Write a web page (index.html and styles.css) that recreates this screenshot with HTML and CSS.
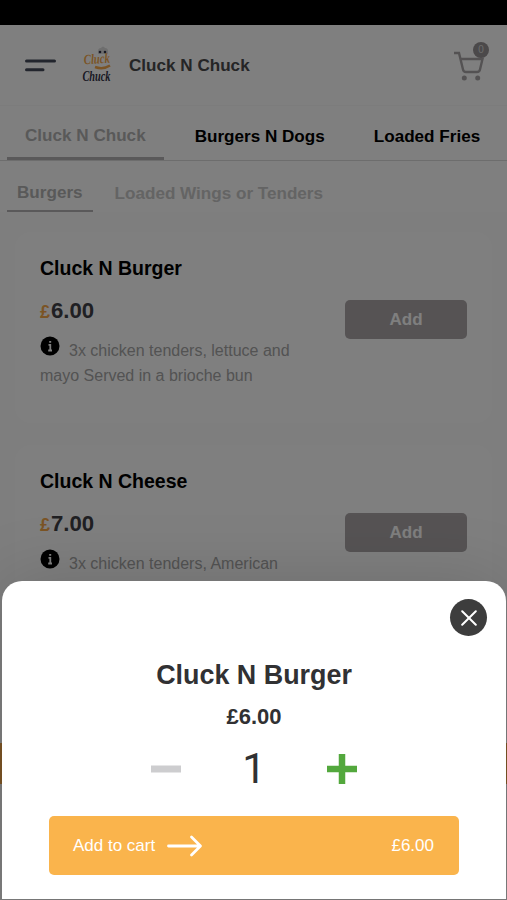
FILE: index.html
```html
<!DOCTYPE html>
<html lang="en">
  <head>
    <meta charset="UTF-8" />
    <meta name="viewport" content="width=device-width, initial-scale=1.0" />
    <title>Cluck N Chuck</title>
    <link rel="stylesheet" href="styles.css">
  </head>
  <body>
    <div class="status-bar"></div>

    <header class="header">
      <svg class="menu-icon" width="31" height="14" viewBox="0 0 31 14">
        <path d="M1.500 2H29.500M1.500 10.700H18" />
      </svg>
      <svg class="logo" width="34" height="40" viewBox="0 0 34 40">
        <path class="hat" d="M17 8V5q0-3 3-3q2-3 4 0q3 0 3 3v3z" />
        <circle cx="19" cy="6" r="1.300" />
        <circle cx="24" cy="6" r="1.300" />
        <text class="logo-top" x="3" y="17.500" textLength="26" lengthAdjust="spacingAndGlyphs" transform="rotate(-3 16 17)">Cluck</text>
        <path class="swoosh" d="M14 21Q22 24 29 19.500" />
        <text class="logo-bottom" x="1.500" y="34.500" textLength="28" lengthAdjust="spacingAndGlyphs">Chuck</text>
      </svg>
      <div class="shop-name">Cluck N Chuck</div>
      <div class="cart">
        <svg width="32" height="32" viewBox="0 0 32 32">
          <path d="M1 3H6L10 19.500Q10.500 22 13 22H24Q26.500 22 27 19.500L29.500 9H8" />
          <circle cx="11.300" cy="28" r="2.500" />
          <circle cx="24.700" cy="28" r="2.500" />
        </svg>
        <span class="cart-count">0</span>
      </div>
    </header>

    <nav class="tabs">
      <a class="tab active">Cluck N Chuck</a>
      <a class="tab">Burgers N Dogs</a>
      <a class="tab">Loaded Fries</a>
    </nav>

    <nav class="sub-tabs">
      <a class="sub-tab active">Burgers</a>
      <a class="sub-tab">Loaded Wings or Tenders</a>
    </nav>

    <main class="menu">
      <div class="card">
        <div class="card-info">
          <h2>Cluck N Burger</h2>
          <div class="price"><span>£</span>6.00</div>
          <p>
            <svg class="info-icon" width="20" height="20" viewBox="0 0 20 20">
              <circle cx="10" cy="10" r="9.500" />
              <path d="M8.500 8.800H10.300V14.500M8.200 14.500H12M9.200 5.800H11.200" />
            </svg>3x chicken tenders, lettuce and mayo Served in a brioche bun
          </p>
        </div>
        <button class="add-btn">Add</button>
      </div>

      <div class="card">
        <div class="card-info">
          <h2>Cluck N Cheese</h2>
          <div class="price"><span>£</span>7.00</div>
          <p>
            <svg class="info-icon" width="20" height="20" viewBox="0 0 20 20">
              <circle cx="10" cy="10" r="9.500" />
              <path d="M8.500 8.800H10.300V14.500M8.200 14.500H12M9.200 5.800H11.200" />
            </svg>3x chicken tenders, American
          </p>
        </div>
        <button class="add-btn">Add</button>
      </div>
    </main>

    <div class="cart-bar"></div>
    <div class="overlay"></div>

    <section class="sheet">
      <button class="close-btn" aria-label="Close">
        <svg width="16" height="16" viewBox="0 0 16 16">
          <path d="M1.200 1.200L14.800 14.800M14.800 1.200L1.200 14.800" />
        </svg>
      </button>
      <h1>Cluck N Burger</h1>
      <div class="sheet-price">£6.00</div>
      <div class="quantity">
        <svg class="minus" width="30" height="30" viewBox="0 0 30 30">
          <path d="M0 15H30" />
        </svg>
        <span>1</span>
        <svg class="plus" width="30" height="30" viewBox="0 0 30 30">
          <path d="M0 15H30M15 0V30" />
        </svg>
      </div>
      <button class="add-to-cart">
        <span>Add to cart</span>
        <svg width="36" height="22" viewBox="0 0 36 22">
          <path d="M1.500 11H33M24.500 2L33.500 11L24.500 20" />
        </svg>
        <span class="total">£6.00</span>
      </button>
    </section>
  </body>
</html>
```

FILE: styles.css
```css
* {
  box-sizing: border-box;
}

body {
  font-family: "Liberation Sans", Arial, sans-serif;
  background-color: #fcfcfc;
  margin: 0;
  height: 900px;
  position: relative;
  overflow: hidden;
}

h1,
h2,
p {
  margin: 0;
}

button {
  font-family: inherit;
  border: none;
  padding: 0;
  cursor: pointer;
}

.status-bar {
  height: 25px;
  background-color: #000;
}

.header {
  display: flex;
  align-items: center;
  height: 81px;
  padding: 1px 18px 0 25px;
  background-color: #fff;
  border-bottom: 1px solid #f8f8f8;
}

.menu-icon {
  fill: none;
  stroke: #454a5a;
  stroke-width: 3;
  stroke-linecap: round;
}

.logo {
  margin-left: 25px;
  overflow: visible;
  fill: #333348;
  font-family: "Liberation Serif", serif;
  font-style: italic;
  font-weight: bold;
}

.logo .hat {
  fill: #dcdcdc;
}

.logo-top {
  font-size: 14px;
  fill: #f6a94b;
}

.logo-bottom {
  font-size: 14px;
}

.swoosh {
  fill: none;
  stroke: #f6a94b;
  stroke-width: 2.5;
}

.shop-name {
  margin-left: 14px;
  padding-top: 1px;
  font-size: 17.1px;
  font-weight: bold;
  color: #4a4a4c;
}

.cart {
  position: relative;
  margin-left: auto;
  width: 36px;
  height: 32px;
}

.cart svg {
  display: block;
  fill: none;
  stroke: #a8a5a6;
  stroke-width: 2.4;
}

.cart circle {
  fill: #a8a5a6;
  stroke: none;
}

.cart-count {
  position: absolute;
  top: -8px;
  right: 0;
  width: 16px;
  height: 16px;
  border-radius: 50%;
  background-color: #979294;
  color: #d8d8d8;
  font-size: 10px;
  line-height: 16px;
  text-align: center;
}

.tabs,
.sub-tabs {
  display: flex;
  padding-left: 7px;
  background-color: #fff;
  font-size: 17.1px;
  font-weight: bold;
  white-space: nowrap;
}

.tabs {
  height: 55px;
  gap: 13px;
  border-bottom: 1px solid #dadada;
}

.tab {
  height: 54px;
  padding: 0 18px;
  line-height: 62px;
  color: #000;
}

.tab.active {
  line-height: 60px;
  color: #b3b3b3;
  border-bottom: 3px solid #b5b3b4;
}

.sub-tabs {
  height: 51px;
  gap: 12px;
}

.sub-tab {
  padding: 0 10px;
  line-height: 66px;
  color: #c8c8c8;
}

.sub-tab.active {
  line-height: 64px;
  color: #b3b3b3;
  border-bottom: 2px solid #b5b3b4;
}

.menu {
  display: flex;
  flex-direction: column;
  gap: 22px;
  padding: 20px 15px 0;
}

.card {
  display: flex;
  justify-content: space-between;
  height: 191px;
  padding: 24px 25px;
  border-radius: 16px;
  background-color: #fff;
}

.card-info {
  width: 265px;
}

.card h2 {
  font-size: 19.5px;
  line-height: 24px;
  color: #000;
}

.price {
  margin-top: 18px;
  font-size: 22.2px;
  font-weight: bold;
  line-height: 26px;
  color: #414147;
}

.price span {
  display: inline-block;
  width: 11px;
  font-size: 18px;
  color: #f6a94b;
}

.card p {
  margin-top: 11px;
  font-size: 16px;
  line-height: 25px;
  color: #a6a6a6;
}

.info-icon {
  margin-right: 9px;
  vertical-align: 0;
}

.info-icon path {
  fill: none;
  stroke: #fff;
  stroke-width: 1.8;
}

.add-btn {
  width: 122px;
  height: 39px;
  margin-top: 44px;
  border-radius: 5px;
  background-color: #aca7a9;
  color: #fff;
  font-size: 17px;
  font-weight: bold;
}

.cart-bar {
  position: absolute;
  left: 0;
  right: 0;
  bottom: 116px;
  height: 41px;
  background-color: #f6a94b;
}

.overlay {
  position: absolute;
  inset: 0;
  background-color: rgba(0, 0, 0, 0.5);
}

.sheet {
  position: absolute;
  left: 2px;
  right: 1px;
  bottom: 1px;
  height: 318px;
  display: flex;
  flex-direction: column;
  align-items: center;
  border-radius: 20px 20px 0 0;
  background-color: #fff;
  box-shadow: 0 0 70px rgba(0, 0, 0, 0.15);
}

.close-btn {
  display: flex;
  align-items: center;
  justify-content: center;
  align-self: flex-end;
  width: 37px;
  height: 37px;
  margin: 18px 19px 0 0;
  border-radius: 50%;
  background-color: #3d3d3d;
}

.close-btn svg {
  fill: none;
  stroke: #fff;
  stroke-width: 2;
  stroke-linecap: round;
}

.sheet h1 {
  margin-top: 23px;
  font-size: 26.9px;
  line-height: 32px;
  color: #313133;
}

.sheet-price {
  margin-top: 14px;
  font-size: 22px;
  font-weight: bold;
  line-height: 24px;
  color: #313133;
}

.quantity {
  display: flex;
  align-items: center;
  justify-content: space-between;
  width: 207px;
  height: 50px;
  margin-top: 15px;
}

/* Roboto has a plain "1" without the foot */
.quantity span {
  font-family: Roboto, "Liberation Sans", sans-serif;
  font-size: 42px;
  line-height: 50px;
  color: #313133;
}

.minus {
  stroke: #cdcdcf;
  stroke-width: 7;
}

.plus {
  stroke: #53a83d;
  stroke-width: 6.5;
}

.add-to-cart {
  display: flex;
  align-items: center;
  width: 410px;
  height: 59px;
  margin-top: 22px;
  padding: 0 25px 0 24px;
  border-radius: 5px;
  background-color: #fab44c;
  color: #fff;
  font-size: 17px;
}

.add-to-cart svg {
  margin-left: 12px;
  fill: none;
  stroke: #fff;
  stroke-width: 2.8;
  stroke-linecap: round;
  stroke-linejoin: round;
}

.total {
  margin-left: auto;
}
```
